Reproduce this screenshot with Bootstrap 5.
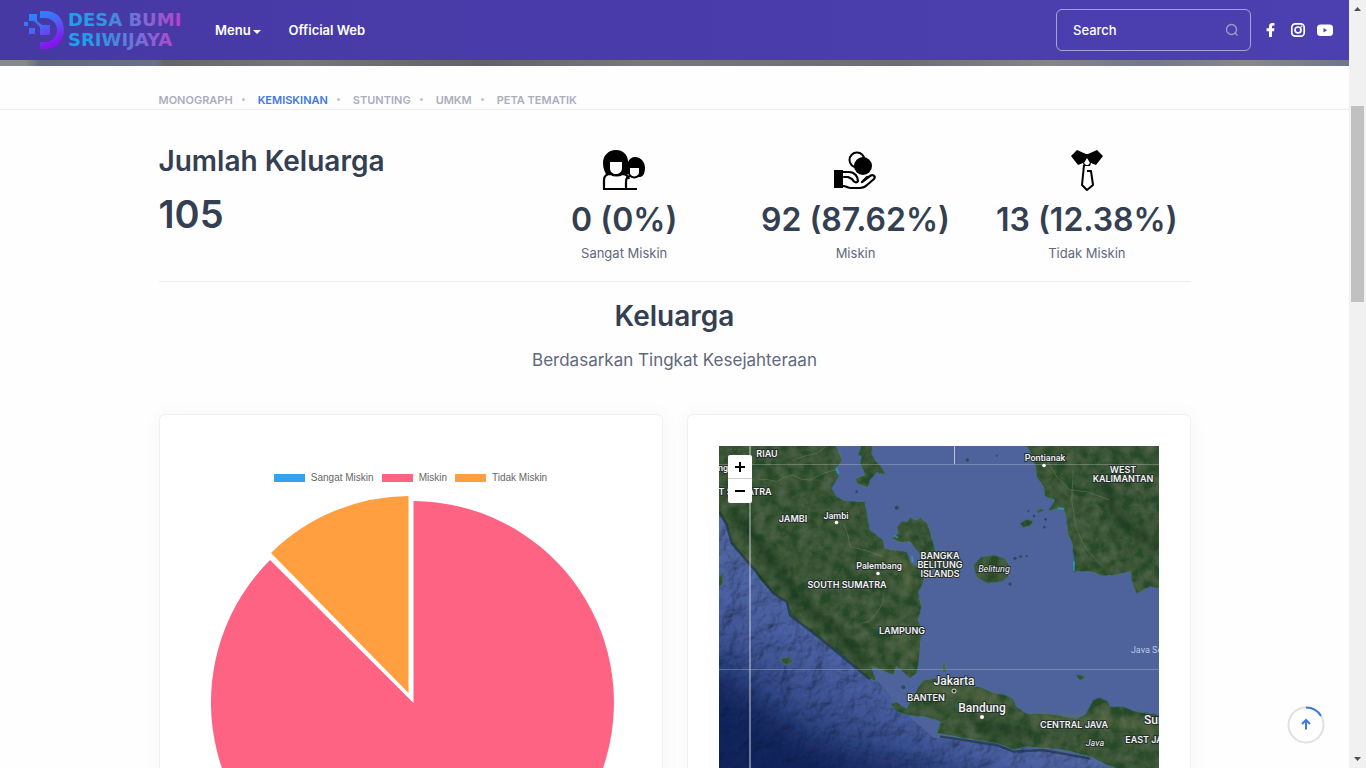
<!DOCTYPE html>
<html lang="id">
<head>
<meta charset="utf-8">
<meta name="viewport" content="width=device-width, initial-scale=1">
<title>Desa Bumi Sriwijaya - Kemiskinan</title>
<link href="https://cdn.jsdelivr.net/npm/bootstrap@5.3.0/dist/css/bootstrap.min.css" rel="stylesheet">
<style>
  body { font-family: Inter, "Liberation Sans", sans-serif; color: #60697b; background: #fefefe; font-size: 13px; }
  .viewport { height: 100vh; overflow: hidden; }
  .page-area { min-width: 0; overflow: hidden; }
  .topbar { height: 60px; padding: 0 16px 0 22px; background: linear-gradient(90deg, #4739a4, #4c3fb0); }
  .topbar .nav-link { color: #fff; font-weight: 600; font-size: 13px; line-height: 20px; padding: 0 0 1px; }
  .topbar .menu-links { gap: 28px; margin-left: 28px; }
  .menu-links .dropdown-toggle::after { margin-left: 2px; vertical-align: 1px; border-width: 4px 4px 0; }
  .search-box { width: 195px; }
  .search-box .form-control { height: 42px; background: transparent; border: 1px solid #a9a2da; border-radius: 6px; color: #fff; font-size: 13px; font-weight: 500; padding: 0 40px 0 16px; }
  .search-box .form-control::placeholder { color: #fff; opacity: 1; }
  .search-box svg { right: 12px; top: 14px; }
  .social-links { gap: 11px; margin-left: 12px; }
  .hero-strip { height: 6px; background: linear-gradient(90deg, #85888c 0, #85888c 25px, #626a80 40px, #68708a 155px, #66656a 165px, #77767a 300px, #626168 480px, #77777c 640px, #6d6c72 900px, #85858a 1050px, #73788a 1150px, #88888c 1250px, #6d768b 100%); }
  .wrap { max-width: 1056px; }
  .tab-strip { border-bottom: 1px solid #ebedee; padding-top: 24px; }
  .tab-strip ul { height: 19px; }
  .tab-strip a { font-size: 11px; line-height: 16px; font-weight: 600; color: #a8afbb; text-decoration: none; }
  .tab-strip a.active { color: #3f78e0; }
  .tab-strip li + li::before { content: ""; display: inline-block; width: 3px; height: 3px; border-radius: 50%; background: #bfc4cc; margin: 0 13px 0 9px; vertical-align: 3px; }
  h1, h2, .figure-big, .figure-mid { color: #343f52; font-weight: 600; margin: 0; }
  h1, h2 { font-size: 28px; line-height: 36px; }
  .figure-big { font-size: 38px; line-height: 48px; margin-top: 11px; }
  .figure-mid { font-size: 32px; line-height: 40px; margin-top: 8px; }
  .stats { padding-top: 33px; padding-bottom: 18px; border-bottom: 1px solid #ebedee; }
  .stats-side { padding: 5px 0 0 10px; }
  .stats p { line-height: 20px; margin: 3px 0 0; }
  .subtitle { font-size: 17px; line-height: 28px; }
  .panel { border: 1px solid #eef0f4; border-radius: 6px; background: #fff; box-shadow: 0 0 20px rgba(30, 34, 40, .04); padding: 31px; }
  .legend-row { font: 10px/12px "Liberation Sans", sans-serif; color: #666; gap: 8px; padding: 26px 0 12px; }
  .swatch { width: 31px; height: 8px; margin-right: 6px; }
  .bg-sangat { background: #36a2eb; } .bg-miskin { background: #ff6384; } .bg-tidak { background: #ff9f40; }
  .zoom-ctl { left: 9px; top: 9px; }
  .zoom-ctl button { width: 24px; height: 24px; background: #fff; color: #000; border: 0; padding: 0; display: block; }
  .zoom-ctl button:first-child { border-bottom: 1px solid #ccc; border-radius: 2px 2px 0 0; }
  .zoom-ctl button:last-child { border-radius: 0 0 2px 2px; }
  .map-text { font-family: Roboto, sans-serif; fill: #f2f4f2; stroke: #26302c; stroke-width: 2px; paint-order: stroke; text-anchor: middle; font-size: 9px; }
  .map-text .region { font-family: Inter, sans-serif; font-weight: 600; }
  .map-text .town { font-size: 9px; font-weight: 500; }
  .map-text .metro { font-size: 12px; font-weight: 500; }
  .map-text .isle { font-style: italic; }
  .map-text .water { fill: #b9c6e4; stroke: none; }
  .to-top { right: 24px; bottom: 24px; width: 38px; height: 38px; border: 0; padding: 0; background: transparent; }
  .scroll-rail { width: 17px; background: #f1f1f1; }
  .scroll-rail span { height: 17px; }
  .scroll-rail .thumb { width: 13px; height: 196px; margin-top: 89px; background: #c1c1c1; }
  .brand-mark text { font: bold 18px "DejaVu Sans", sans-serif; }
</style>
</head>
<body>
<div class="viewport d-flex">
  <div class="page-area flex-grow-1 position-relative">
    <header class="topbar d-flex align-items-center">
      <a href="#" class="brand-mark d-block" aria-label="Desa Bumi Sriwijaya">
        <svg width="165" height="44" viewBox="0 0 165 44" class="d-block">
          <defs>
            <linearGradient id="dg" x1="0" y1="0" x2=".5" y2="1"><stop offset="0" stop-color="#1e90ff"/><stop offset=".5" stop-color="#4967f5"/><stop offset="1" stop-color="#8a10ef"/></linearGradient>
            <linearGradient id="tg" gradientUnits="userSpaceOnUse" x1="46" y1="0" x2="163" y2="0"><stop offset="0" stop-color="#16a3ef"/><stop offset=".35" stop-color="#3a8fe0"/><stop offset=".65" stop-color="#8069d6"/><stop offset="1" stop-color="#c03cc4"/></linearGradient>
          </defs>
          <path fill="url(#dg)" d="M18 3h5c12 0 19 8 19 19s-8 19-19 19h-5v-7h5c7 0 12-5 12-12s-5-12-12-12h-5zM7 6h8v7l5 4h8v10H18v-8l-6-6H7zM2 14h4v4H2zM7 20h6v6H7z"/>
          <text x="46" y="18" fill="url(#tg)">DESA BUMI</text>
          <text x="46" y="38" fill="url(#tg)">SRIWIJAYA</text>
        </svg>
      </a>
      <nav class="menu-links nav" aria-label="Utama">
        <button type="button" class="nav-link dropdown-toggle border-0 bg-transparent" data-bs-toggle="dropdown">Menu</button>
        <a class="nav-link" href="#">Official Web</a>
      </nav>
      <form class="search-box position-relative ms-auto" role="search">
        <input class="form-control" type="text" placeholder="Search" aria-label="Search">
        <svg class="position-absolute" width="14" height="14" viewBox="0 0 14 14" fill="none" stroke="#a49dbb" stroke-width="1.300"><circle cx="6.500" cy="6.500" r="5"/><path d="M10 10l2.500 2.500"/></svg>
      </form>
      <div class="social-links d-flex align-items-center">
        <a href="#" aria-label="Facebook"><svg class="d-block" width="16" height="16" viewBox="0 0 16 16" fill="#fff"><path d="M6 15V9.200H3.600V6.300H6V4.500C6 2.200 7.400 1 9.500 1c1 0 2 .2 2 .2v2.300h-1.100c-1.100 0-1.400.6-1.400 1.300v1.500h2.500L11 9.200H9V15z"/></svg></a>
        <a href="#" aria-label="Instagram"><svg class="d-block" width="16" height="16" viewBox="0 0 16 16" fill="none" stroke="#fff" stroke-width="1.700"><rect x="1.800" y="1.800" width="12.400" height="12.400" rx="3.500"/><circle cx="8" cy="8" r="3"/><circle cx="11.600" cy="4.400" r=".5" stroke-width="1"/></svg></a>
        <a href="#" aria-label="YouTube"><svg class="d-block" width="16" height="16" viewBox="0 0 16 16"><rect y="2.500" width="16" height="11.500" rx="3.500" fill="#fff"/><path fill="#4c3fb0" d="M6.500 6v4.500L10 8.200z"/></svg></a>
      </div>
    </header>
    <div class="hero-strip"></div>

    <nav class="tab-strip" aria-label="Data desa">
      <div class="container wrap">
        <ul class="list-unstyled d-flex m-0">
          <li><a href="#">MONOGRAPH</a></li>
          <li><a href="#" class="active" aria-current="page">KEMISKINAN</a></li>
          <li><a href="#">STUNTING</a></li>
          <li><a href="#">UMKM</a></li>
          <li><a href="#">PETA TEMATIK</a></li>
        </ul>
      </div>
    </nav>

    <main class="container wrap">
      <section class="stats">
        <div class="row">
          <div class="col-4">
            <h1>Jumlah Keluarga</h1>
            <div class="figure-big">105</div>
          </div>
          <div class="col-8 stats-side">
            <div class="row g-0 text-center">
              <div class="col-4">
                <svg width="44" height="44" viewBox="0 0 44 44">
                  <path d="M14 2c8 0 12 6 12 12 1-3 4-5 7-5 6 0 10 5 10 11 0 5-2 9-5 9H29l-3-3-3 3H6C3 25 1 21 1 15 1 8 6 2 14 2z"/>
                  <path fill="#fff" stroke="#000" stroke-width="2.200" d="M25 41H2V32c0-4 3-6 7-6 3 2 8 2 11 0 3 0 6 2 7 5M24 41v-7c0-4 2-6 5-6 2 2 5 2 7 0M24 41h11"/>
                  <path fill="#fff" d="M8 14h12v6c0 4-3 6-6 6s-6-2-6-6zM28 20h9v4c0 3-2 5-5 5s-4-2-4-5z"/>
                  <path fill="none" stroke="#000" stroke-width="1.500" d="M8 25c3 3 9 3 12 0M28 27c2 3 6 3 9 0"/>
                </svg>
                <div class="figure-mid">0 (0%)</div>
                <p>Sangat Miskin</p>
              </div>
              <div class="col-4">
                <svg width="44" height="44" viewBox="0 0 44 44">
                  <circle cx="24" cy="12" r="7.500" fill="#fff" stroke="#000" stroke-width="2"/>
                  <circle cx="30" cy="18" r="9"/><path d="M1 22h9v18H1z"/>
                  <path fill="none" stroke="#000" stroke-width="2.200" stroke-linecap="round" stroke-linejoin="round" d="M10 24h6c6 0 9 5 9 9-1 2-4 2-6-2l-4-2h-4M10 38c4 0 4 2 8 2h9c3 0 5-1 7-3l7-6c2-3-1-5-4-3l-8 6 5-5"/>
                </svg>
                <div class="figure-mid">92 (87.62%)</div>
                <p>Miskin</p>
              </div>
              <div class="col-4">
                <svg width="44" height="44" viewBox="0 0 44 44">
                  <path d="M12 2l9 4h2l9-4 6 6-7 9-5-2-1 3h-6l-1-3-5 2-7-9z"/>
                  <path fill="#fff" d="M22 10l3 5-2 2h-2l-2-2z"/>
                  <path fill="none" stroke="#000" stroke-width="2" stroke-linejoin="round" d="M19 17l-2 20 5 5 6-5-2-14h-4"/>
                </svg>
                <div class="figure-mid">13 (12.38%)</div>
                <p>Tidak Miskin</p>
              </div>
            </div>
          </div>
        </div>
      </section>

      <section class="text-center pt-3 pb-4 mb-3">
        <h2>Keluarga</h2>
        <div class="subtitle mt-2 pt-1">Berdasarkan Tingkat Kesejahteraan</div>
      </section>

      <section class="row gx-4">
        <div class="col-6">
          <div class="panel h-100">
            <div class="legend-row d-flex justify-content-center">
              <div class="d-flex align-items-center"><span class="swatch bg-sangat"></span>Sangat Miskin</div>
              <div class="d-flex align-items-center"><span class="swatch bg-miskin"></span>Miskin</div>
              <div class="d-flex align-items-center"><span class="swatch bg-tidak"></span>Tidak Miskin</div>
            </div>
            <svg class="d-block w-100" viewBox="0 0 440 420" role="img" aria-label="Diagram lingkaran keluarga">
              <path fill="#ff6384" d="M222.500 207V5A201.500 201.500 0 1 1 79 64z"/>
              <path fill="#ff9f40" d="M217.500 197V0A198 198 0 0 0 80 57z"/>
            </svg>
          </div>
        </div>
        <div class="col-6">
          <div class="panel h-100">
            <div class="position-relative">
              <svg class="d-block w-100" viewBox="0 0 440 440" role="img" aria-label="Peta satelit">
                <defs>
                  <linearGradient id="sea" gradientUnits="userSpaceOnUse" x1="110" y1="150" x2="30" y2="285"><stop offset="0" stop-color="#4e639c"/><stop offset=".35" stop-color="#465b9b"/><stop offset=".75" stop-color="#304581"/><stop offset="1" stop-color="#172759"/></linearGradient>
                  <filter id="terrain" x="0" y="0" width="100%" height="100%">
                    <feTurbulence type="fractalNoise" baseFrequency=".06" numOctaves="5" seed="8" result="n"/>
                    <feDiffuseLighting in="n" surfaceScale="4" lighting-color="#fff" result="l"><feDistantLight azimuth="225" elevation="60"/></feDiffuseLighting>
                    <feComposite in="SourceGraphic" in2="l" operator="arithmetic" k1="1.150" result="m"/>
                    <feComposite in="m" in2="SourceGraphic" operator="in"/>
                  </filter>
                  <!-- forest mottling: fine noise added over the green -->
                  <filter id="forest" x="0" y="0" width="100%" height="100%">
                    <feTurbulence type="fractalNoise" baseFrequency=".03" numOctaves="6" seed="4" result="n"/>
                    <feColorMatrix in="n" type="matrix" values=".5 .5 0 0 -.36  .5 .5 0 0 -.34  .4 .4 0 0 -.33  0 0 0 0 1" result="c"/>
                    <feComposite in="SourceGraphic" in2="c" operator="arithmetic" k2="1" k3=".14" result="m"/>
                    <feComposite in="m" in2="SourceGraphic" operator="in"/>
                  </filter>
                  <filter id="soft" x="-20%" y="-50%" width="140%" height="200%"><feGaussianBlur stdDeviation="14"/></filter>
                  <filter id="haze" x="-20%" y="-20%" width="140%" height="140%"><feGaussianBlur stdDeviation="9"/></filter>
                </defs>
                <rect width="440" height="440" fill="#4e639c"/>
                <!-- Indian Ocean shelf and trench -->
                <g filter="url(#terrain)">
                  <path fill="url(#sea)" d="M0 65L70 150 160 236 180 262 215 292 330 305 440 322V440H0z"/>
                </g>
                <path filter="url(#soft)" fill="#10205a" opacity=".6" d="M-30 200L30 240 80 290 170 310 300 345 440 365V470H-30z"/>
                <g transform="translate(-9 -6) scale(.33333)">
                  <g fill="#28492c" stroke="#2f6a80" stroke-width="3" stroke-linejoin="round" filter="url(#forest)">
                    <path d="M20 10H375L398 60 375 90 388 108 365 145 380 170 405 182 465 185 475 240 480 270 520 300 525 325 590 335 605 370 625 380 645 400 640 430 625 455 635 500 625 540 635 570 628 660 620 700 600 715 560 680 550 705 485 680 500 725 480 718 400 650 330 595 240 525 230 485 190 460 150 420 130 385 85 335 65 310 50 255 20 210z"/>
                    <path d="M545 295L565 280 560 262 575 243 592 245 600 232 618 240 632 233 652 248 665 290 678 340 700 360 735 375 745 400 720 412 690 395 640 375 630 345 600 305 570 308z"/>
                    <path d="M455 10H490L485 40 495 60 510 75 530 105 500 98 480 120 475 145 440 130 435 115 465 105 450 70 455 50 445 45z"/>
                    <path d="M790 375L815 350 850 345 885 355 900 380 895 410 875 425 835 430 800 415 795 395z"/>
                    <path d="M945 10L960 35 965 60 975 75 980 110 1000 140 1005 170 1035 180 1015 212 1060 205 1070 240 1072 280 1085 305 1092 360 1090 395 1140 395 1180 408 1220 405 1260 395 1270 440 1280 462 1320 440 1360 450V10z"/>
                    <path d="M540 790L560 785 575 797 590 805 625 740 640 720 675 715 700 730 810 740 845 755 885 765 910 775 920 800 950 820 1010 820 1100 835 1125 825 1150 780 1170 772 1195 785 1200 800 1240 800 1280 815 1360 825V995L1220 985 1190 975 1140 950 1060 930 1000 925 950 920 910 930 860 910 760 895 710 885 680 880 692 845 650 832 590 825 560 815z"/>
                    <path d="M930 250L950 238 970 245 960 258 940 262zM978 213L995 205 1000 212 985 220zM212 655L235 650 250 665 235 678 215 668zM1095 703L1115 705 1130 712 1110 720zM25 410L40 400 38 435 25 440zM695 675l10-5 5 22-10 5z"/>
                  </g>
                  <path fill="none" stroke="#172c38" stroke-width="7" opacity=".6" d="M27 215L50 255 65 310 130 385 190 460 230 485 240 525 330 595 480 718M690 890L760 900 860 915 910 935 1000 930 1140 956"/>
                  <path fill="none" stroke="#0c2f18" stroke-width="30" opacity=".45" filter="url(#haze)" d="M70 220L170 340 270 480 370 560 470 680M800 850L850 870 960 880M1180 120L1220 230 1340 320"/>
                  <path fill="none" stroke="#6f7a50" stroke-width="30" opacity=".35" filter="url(#haze)" d="M500 340L580 370 600 450M560 560L600 640M640 740L780 760 880 800M960 840L1180 840 1340 860"/>
                  <path fill="none" stroke="#87936b" stroke-width="2" opacity=".5" d="M145 120L170 118 200 125 225 112 250 105 275 118 300 120 340 100 375 90M250 60L285 48 320 40 345 22M400 250L415 290 420 320 470 332 520 350M450 550L475 545 500 520 518 490 520 470M1010 60L1040 110 1080 150 1130 155 1200 180M1090 90L1085 180 1100 270 1130 330 1180 380"/>
                  <path fill="none" stroke="#27b8d0" stroke-width="6" opacity=".5" stroke-linecap="round" d="M380 85l5 14M1092 365l0 25M1045 205l14 1M606 350l2 14M556 288l6 4"/>
                  <g fill="#254c5f"><circle cx="440" cy="155" r="4"/><circle cx="560" cy="203" r="6"/><circle cx="772" cy="60" r="5"/><circle cx="860" cy="47" r="3"/><circle cx="955" cy="214" r="3"/><circle cx="972" cy="228" r="4"/><circle cx="1007" cy="238" r="4"/><circle cx="1003" cy="262" r="4"/><circle cx="915" cy="355" r="5"/><circle cx="932" cy="350" r="4"/><circle cx="950" cy="349" r="3"/><circle cx="900" cy="432" r="5"/><circle cx="580" cy="742" r="6"/></g>
                </g>
                <!-- graticule -->
                <g fill="none" stroke="#d4d8dc"><path d="M31 0V440" stroke-width="1.200" opacity=".8"/><path d="M235.500 0V18" opacity=".85"/><path d="M0 18.500H440M0 223.500H440" opacity=".3"/></g>
                <g class="map-text">
                  <g class="region">
                    <text x="48" y="11">RIAU</text><text x="26" y="49">T SUMATRA</text>
                    <text x="74" y="76">JAMBI</text><text x="128" y="142">SOUTH SUMATRA</text><text x="183" y="188">LAMPUNG</text>
                    <text x="221" y="113">BANGKA</text><text x="221" y="122">BELITUNG</text><text x="221" y="131">ISLANDS</text>
                    <text x="404" y="27">WEST</text><text x="404" y="36">KALIMANTAN</text>
                    <text x="207" y="255">BANTEN</text><text x="355" y="282">CENTRAL JAVA</text><text x="431" y="297">EAST JAVA</text>
                  </g>
                  <g class="town"><text x="117" y="73">Jambi</text><text x="160" y="123">Palembang</text><text x="326" y="15">Pontianak</text><text x="3" y="25">ing</text></g>
                  <g class="metro"><text x="235" y="239">Jakarta</text><text x="263" y="266">Bandung</text><text x="450" y="278">Surabaya</text></g>
                  <g class="isle"><text x="275" y="126">Belitung</text><text x="376" y="300">Java</text></g>
                  <text x="430" y="207" class="water">Java Sea</text>
                </g>
                <g fill="#fff"><circle cx="117.500" cy="76.500" r="1.800"/><circle cx="159" cy="127.500" r="1.800"/><circle cx="325" cy="19.500" r="1.800"/><circle cx="263" cy="271" r="2"/><circle cx="235" cy="245" r="2" fill="#222" stroke="#fff" stroke-width=".8"/></g>
              </svg>
              <div class="zoom-ctl position-absolute">
                <button type="button" aria-label="Zoom in"><svg class="d-block mx-auto" width="10" height="10"><path d="M5 0v10M0 5h10" stroke="#000" stroke-width="2"/></svg></button>
                <button type="button" aria-label="Zoom out"><svg class="d-block mx-auto" width="10" height="10"><path d="M0 5h10" stroke="#000" stroke-width="2"/></svg></button>
              </div>
            </div>
          </div>
        </div>
      </section>
    </main>
    <button type="button" class="to-top position-absolute" aria-label="Ke atas">
      <svg class="d-block" width="38" height="38" viewBox="0 0 38 38" fill="none"><circle cx="19" cy="19" r="17.500" stroke="#dfe0e2" stroke-width="2"/><path d="M19 1.500A17.500 17.500 0 0 1 34 10M19 23.500V14M15 18l4-4 4 4" stroke="#3f78e0" stroke-width="2"/></svg>
    </button>
  </div>
  <div class="scroll-rail d-flex flex-column align-items-center flex-shrink-0" aria-hidden="true">
    <span><svg class="d-block" width="17" height="17"><path d="M5 11h7L8.500 7z" fill="#505050"/></svg></span>
    <div class="thumb"></div>
    <span class="mt-auto"><svg class="d-block" width="17" height="17"><path d="M5 6h7l-3.500 4z" fill="#505050"/></svg></span>
  </div>
</div>
<script src="https://cdn.jsdelivr.net/npm/bootstrap@5.3.0/dist/js/bootstrap.bundle.min.js"></script>
</body>
</html>
